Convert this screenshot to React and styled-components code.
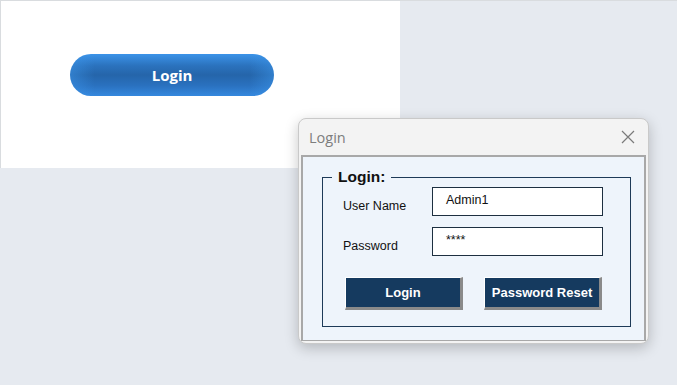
import React from 'react';
import styled, { createGlobalStyle } from 'styled-components';

const GlobalStyle = createGlobalStyle`
  html, body {
    margin: 0;
    padding: 0;
    background: #e6eaf0;
  }
  body {
    width: 677px;
    height: 385px;
    overflow: hidden;
    font-family: "Liberation Sans", Arial, sans-serif;
  }
`;

const Desktop = styled.div`
  position: relative;
  width: 677px;
  height: 385px;
  background: #e6eaf0;
  border-top: 1px solid #d9dcdf;
  box-sizing: border-box;
`;

const Sheet = styled.div`
  width: 400px;
  height: 167px;
  background: #ffffff;
  border-left: 1px solid #d9dcdf;
  box-sizing: border-box;
  padding: 53px 0 0 69px;
`;

const PillButton = styled.button`
  width: 204px;
  height: 42px;
  border: none;
  border-radius: 21px;
  color: #ffffff;
  font-family: "Open Sans", "Noto Sans", sans-serif;
  font-weight: 700;
  font-size: 15px;
  background:
    linear-gradient(90deg, rgba(60, 150, 235, 0.5) 0%, rgba(60, 150, 235, 0) 12%, rgba(60, 150, 235, 0) 88%, rgba(60, 150, 235, 0.5) 100%),
    linear-gradient(180deg, #3b93e8 0%, #2b72bd 28%, #2565aa 50%, #2a71bf 75%, #3588de 100%);
  cursor: pointer;
`;

const Window = styled.div`
  position: absolute;
  left: 298px;
  top: 117px;
  width: 351px;
  height: 226px;
  background: #f3f3f3;
  border: 1px solid #c9c9c9;
  border-radius: 8px;
  box-sizing: border-box;
  box-shadow: 0 4px 14px rgba(0, 0, 0, 0.22);
  display: flex;
  flex-direction: column;
  overflow: hidden;
`;

const TitleBar = styled.div`
  height: 36px;
  flex: none;
  display: flex;
  align-items: center;
  justify-content: space-between;
  padding: 0 13px 0 10px;
`;

const Title = styled.span`
  font-family: "Open Sans", "Noto Sans", sans-serif;
  font-size: 14.5px;
  color: #7d7d7d;
`;

const Close = styled.svg`
  width: 14px;
  height: 14px;
  display: block;
`;

const Body = styled.div`
  flex: 1;
  margin: 0 2px 2px 2px;
  background: #eef4fb;
  border: 2px solid #a8a8a8;
  border-bottom-width: 1px;
  padding: 11px 13px 0 19px;
`;

const Group = styled.fieldset`
  margin: 0;
  height: 159px;
  box-sizing: border-box;
  border: 1px solid #1d3a57;
  padding: 0 0 0 20px;
`;

const Legend = styled.legend`
  font-family: "Liberation Sans", Arial, sans-serif;
  font-weight: 700;
  font-size: 15.5px;
  color: #111111;
  padding: 0 6px;
  margin-left: -11px;
`;

const Row = styled.div`
  display: flex;
  align-items: center;
  height: 29px;
  margin-top: ${p => p.$top}px;
`;

const Label = styled.span`
  width: 89px;
  font-size: 12.5px;
  color: #111111;
  padding-top: ${p => p.$drop}px;
`;

const Field = styled.div`
  width: 171px;
  height: 29px;
  box-sizing: border-box;
  background: #ffffff;
  border: 1px solid #1d2f40;
  padding: 5px 0 0 13px;
  font-size: 12.5px;
  color: #111111;
`;

const Buttons = styled.div`
  display: flex;
  gap: 21px;
  margin-top: 21px;
  padding-left: 2px;
`;

const BevelButton = styled.button`
  width: 118px;
  height: 33px;
  box-sizing: border-box;
  background: #153a5f;
  color: #ffffff;
  font-family: "Liberation Sans", Arial, sans-serif;
  font-weight: 700;
  font-size: 13px;
  border-style: solid;
  border-width: 1px 3px 3px 1px;
  border-color: #ffffff #8a8a8a #8a8a8a #ffffff;
  padding: 0;
  cursor: pointer;
`;

export default function App() {
  return (
    <>
      <GlobalStyle />
      <Desktop>
        <Sheet>
          <PillButton>Login</PillButton>
        </Sheet>
        <Window>
          <TitleBar>
            <Title>Login</Title>
            <Close viewBox="0 0 14 14">
              <path d="M1 1 L13 13 M13 1 L1 13" stroke="#7a7a7a" strokeWidth="1.2" fill="none" />
            </Close>
          </TitleBar>
          <Body>
            <Group>
              <Legend>Login:</Legend>
              <Row $top={1}>
                <Label $drop={8}>User Name</Label>
                <Field>Admin1</Field>
              </Row>
              <Row $top={11}>
                <Label $drop={8}>Password</Label>
                <Field>****</Field>
              </Row>
              <Buttons>
                <BevelButton>Login</BevelButton>
                <BevelButton>Password Reset</BevelButton>
              </Buttons>
            </Group>
          </Body>
        </Window>
      </Desktop>
    </>
  );
}
